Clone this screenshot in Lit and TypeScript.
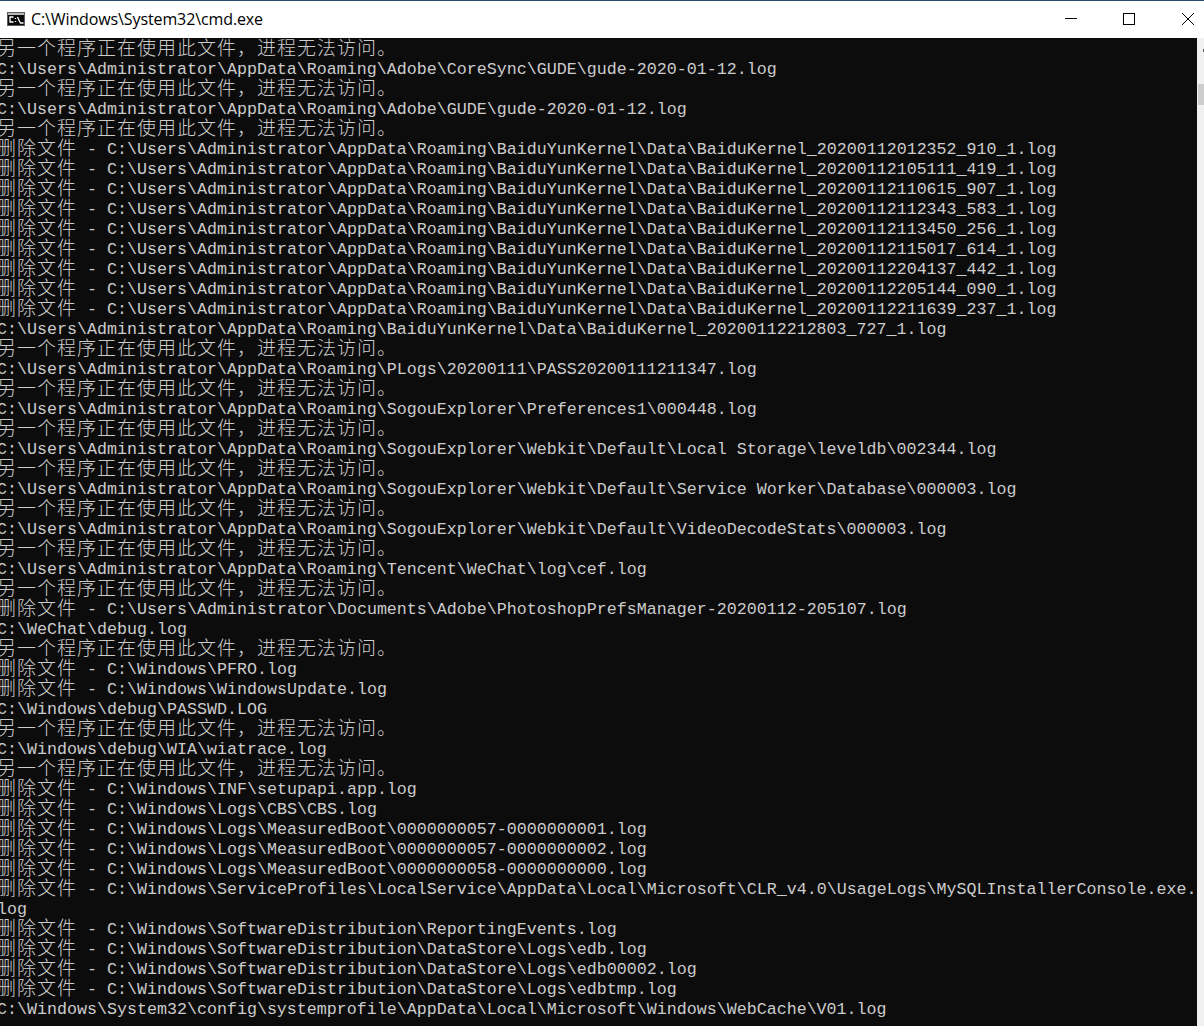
import { LitElement, html, css } from "lit";
import { customElement } from "lit/decorators.js";

const DENIED = "另一个程序正在使用此文件，进程无法访问。";
const DEL = "删除文件 - ";
const R = "C:\\Users\\Administrator\\AppData\\Roaming\\";
const B = R + "BaiduYunKernel\\Data\\BaiduKernel_";
const S = R + "SogouExplorer\\";
const W = "C:\\Windows\\";
const D = "C:\\Windows\\SoftwareDistribution\\";
const M = "C:\\Windows\\Logs\\MeasuredBoot\\";

const LINES: string[] = [
  DENIED,
  R + "Adobe\\CoreSync\\GUDE\\gude-2020-01-12.log",
  DENIED,
  R + "Adobe\\GUDE\\gude-2020-01-12.log",
  DENIED,
  DEL + B + "20200112012352_910_1.log",
  DEL + B + "20200112105111_419_1.log",
  DEL + B + "20200112110615_907_1.log",
  DEL + B + "20200112112343_583_1.log",
  DEL + B + "20200112113450_256_1.log",
  DEL + B + "20200112115017_614_1.log",
  DEL + B + "20200112204137_442_1.log",
  DEL + B + "20200112205144_090_1.log",
  DEL + B + "20200112211639_237_1.log",
  B + "20200112212803_727_1.log",
  DENIED,
  R + "PLogs\\20200111\\PASS20200111211347.log",
  DENIED,
  S + "Preferences1\\000448.log",
  DENIED,
  S + "Webkit\\Default\\Local Storage\\leveldb\\002344.log",
  DENIED,
  S + "Webkit\\Default\\Service Worker\\Database\\000003.log",
  DENIED,
  S + "Webkit\\Default\\VideoDecodeStats\\000003.log",
  DENIED,
  R + "Tencent\\WeChat\\log\\cef.log",
  DENIED,
  DEL + "C:\\Users\\Administrator\\Documents\\Adobe\\PhotoshopPrefsManager-20200112-205107.log",
  "C:\\WeChat\\debug.log",
  DENIED,
  DEL + W + "PFRO.log",
  DEL + W + "WindowsUpdate.log",
  W + "debug\\PASSWD.LOG",
  DENIED,
  W + "debug\\WIA\\wiatrace.log",
  DENIED,
  DEL + W + "INF\\setupapi.app.log",
  DEL + W + "Logs\\CBS\\CBS.log",
  DEL + M + "0000000057-0000000001.log",
  DEL + M + "0000000057-0000000002.log",
  DEL + M + "0000000058-0000000000.log",
  DEL + W + "ServiceProfiles\\LocalService\\AppData\\Local\\Microsoft\\CLR_v4.0\\UsageLogs\\MySQLInstallerConsole.exe.",
  "log",
  DEL + D + "ReportingEvents.log",
  DEL + D + "DataStore\\Logs\\edb.log",
  DEL + D + "DataStore\\Logs\\edb00002.log",
  DEL + D + "DataStore\\Logs\\edbtmp.log",
  W + "System32\\config\\systemprofile\\AppData\\Local\\Microsoft\\Windows\\WebCache\\V01.log",
];

function splitRuns(line: string) {
  return line.split(/([\u3000-\u9fff\uff00-\uffef]+)/).map((part, i) =>
    i % 2 ? html`<span class="cjk">${part}</span>` : part
  );
}

@customElement("app-root")
export class AppRoot extends LitElement {
  static styles = css`
    :host {
      display: block;
      width: 1204px;
      height: 1026px;
      overflow: hidden;
      background: #0c0c0c;
    }
    .window {
      display: flex;
      flex-direction: column;
      height: 1026px;
    }
    .titlebar {
      flex: none;
      box-sizing: border-box;
      height: 38px;
      border-top: 1px solid #2b4f73;
      background: #ffffff;
      display: flex;
      align-items: center;
      padding: 0 0 1px 7px;
    }
    .app-icon {
      flex: none;
      display: block;
      margin-right: 6px;
    }
    .title {
      flex: 1;
      font: 16px "Open Sans", sans-serif;
      letter-spacing: -0.11px;
      color: #000000;
      white-space: pre;
    }
    .controls {
      flex: none;
      width: 139px;
      display: flex;
    }
    .control {
      flex: none;
      width: 58px;
    }
    .control.wide {
      width: 59px;
    }
    .control.last {
      width: 22px;
    }
    .control svg {
      display: block;
    }
    .main {
      flex: 1;
      min-height: 0;
      display: flex;
    }
    .console {
      flex: 1;
      min-width: 0;
      overflow: hidden;
      margin-left: -3px;
      font-family: "Liberation Mono", "Noto Sans CJK SC", monospace;
      font-size: 16.67px;
      color: #cccccc;
      background: #0c0c0c;
    }
    .line {
      height: 20px;
      line-height: 24px;
      white-space: pre;
    }
    .cjk {
      font-family: "Noto Sans CJK SC", sans-serif;
      font-size: 19px;
      letter-spacing: 1px;
      font-weight: 300;
      line-height: 0;
      vertical-align: -1px;
    }
    .scrollbar {
      flex: none;
      width: 7px;
      background: #f0f0f0;
      padding-top: 11px;
      box-sizing: border-box;
    }
    .arrow {
      width: 1px;
      height: 3px;
      margin: 0 0 32px 6px;
      background: #606060;
    }
    .thumb {
      width: 6px;
      height: 21px;
      margin-left: 1px;
      background: #cdcdcd;
    }
  `;

  render() {
    return html`<div class="window">
      <div class="titlebar">
        <svg class="app-icon" width="18" height="14" viewBox="0 0 18 14">
          <rect width="18" height="14" fill="#5a5a5a" />
          <rect x="1" y="3" width="16" height="10" fill="#0a0a0a" />
          <rect x="1" y="1" width="16" height="2" fill="#b8b8b8" />
          <path d="M6.5 5H3V10H6.5M8.5 6v1M8.5 9v1M10.5 5l2.5 5.500M13 11h3.500" stroke="#ffffff" stroke-width="1.300" fill="none" />
        </svg>
        <div class="title">C:\\Windows\\System32\\cmd.exe</div>
        <div class="controls">
          <div class="control">
            <svg width="12" height="12" viewBox="0 0 12 12"><path d="M0 5.500h12" stroke="#000" /></svg>
          </div>
          <div class="control wide">
            <svg width="12" height="12" viewBox="0 0 12 12"><rect x="0.500" y="0.500" width="11" height="11" fill="none" stroke="#000" /></svg>
          </div>
          <div class="control last">
            <svg width="12" height="12" viewBox="0 0 12 12"><path d="M0 0L12 12M12 0L0 12" stroke="#000" /></svg>
          </div>
        </div>
      </div>
      <div class="main">
        <div class="console">
          ${LINES.map((l) => html`<div class="line">${splitRuns(l)}</div>`)}
        </div>
        <div class="scrollbar"><div class="arrow"></div><div class="thumb"></div></div>
      </div>
    </div>`;
  }
}
